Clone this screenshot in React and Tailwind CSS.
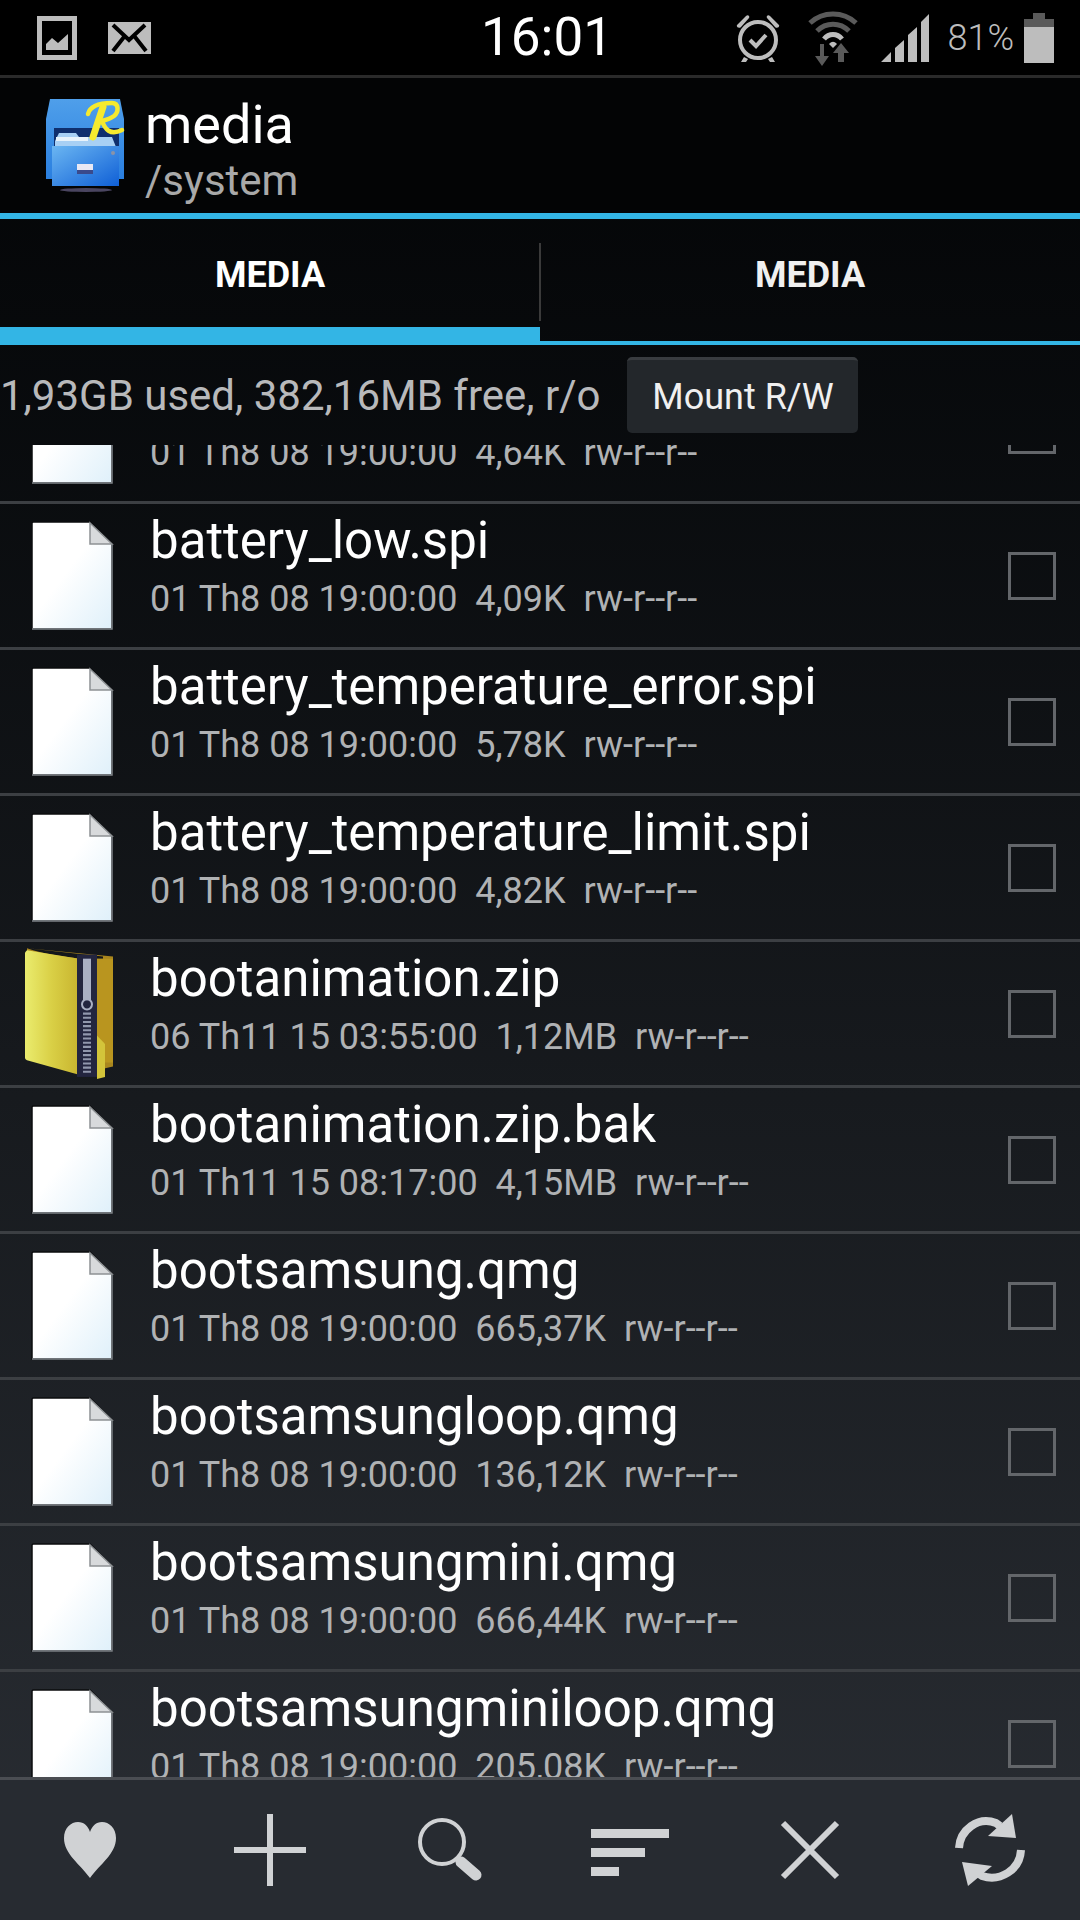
import React from 'react';

const files = [
    { name: '', meta: '01 Th8 08 19:00:00  4,64K  rw-r--r--' },
    { name: 'battery_low.spi', meta: '01 Th8 08 19:00:00  4,09K  rw-r--r--' },
    { name: 'battery_temperature_error.spi', meta: '01 Th8 08 19:00:00  5,78K  rw-r--r--' },
    { name: 'battery_temperature_limit.spi', meta: '01 Th8 08 19:00:00  4,82K  rw-r--r--' },
    { name: 'bootanimation.zip', meta: '06 Th11 15 03:55:00  1,12MB  rw-r--r--', zip: true },
    { name: 'bootanimation.zip.bak', meta: '01 Th11 15 08:17:00  4,15MB  rw-r--r--' },
    { name: 'bootsamsung.qmg', meta: '01 Th8 08 19:00:00  665,37K  rw-r--r--' },
    { name: 'bootsamsungloop.qmg', meta: '01 Th8 08 19:00:00  136,12K  rw-r--r--' },
    { name: 'bootsamsungmini.qmg', meta: '01 Th8 08 19:00:00  666,44K  rw-r--r--' },
    { name: 'bootsamsungminiloop.qmg', meta: '01 Th8 08 19:00:00  205,08K  rw-r--r--' },
];

const FileIcon = () => (
    <svg width="84" height="110" viewBox="0 0 84 110" className="shrink-0">
        <defs>
            <linearGradient id="page" x1="0" y1="0" x2="1" y2="1">
                <stop offset="0.45" stopColor="#ffffff" />
                <stop offset="1" stopColor="#dff0fa" />
            </linearGradient>
        </defs>
        <path d="M3 1H60L82 23V108H2V2Z" fill="url(#page)" stroke="#0b0c0e" strokeWidth="1.5" />
        <path d="M82 23V108H2" fill="none" stroke="#80858a" strokeWidth="1.5" />
        <path d="M60 2V23H82Z" fill="#d8dadc" stroke="#8d9194" strokeWidth="1.5" />
    </svg>
);

const ZipIcon = () => (
    <svg width="92" height="139" viewBox="0 0 92 134" preserveAspectRatio="none">
        <defs>
            <linearGradient id="zipFront" x1="0" y1="0" x2="1" y2="0">
                <stop offset="0" stopColor="#eaec6e" />
                <stop offset="0.5" stopColor="#d9cf45" />
                <stop offset="1" stopColor="#c8b42f" />
            </linearGradient>
        </defs>
        <path d="M2 8L88 16V122L78 124V16Z" fill="#a9861e" />
        <path d="M2 8C20 14 40 16 54 18H88V120H80V122L2 104Z" fill="#a9861e" />
        <path d="M2 10L54 18V130L2 116C0 115 0 114 0 112V12Z" fill="url(#zipFront)" />
        <path d="M72 18H88V118H80V100L72 92Z" fill="#b9951f" />
        <path d="M72 92L80 100V132L72 134Z" fill="#d3c43a" />
        <rect x="52" y="14" width="20" height="118" fill="#23253f" />
        <path d="M58 18H66V58H58Z" fill="#aab0c4" />
        <circle cx="62" cy="62" r="5" fill="none" stroke="#aab0c4" strokeWidth="2" />
        <path d="M62 70V130" stroke="#9197ad" strokeWidth="8" strokeDasharray="2 2" />
    </svg>
);

const AppIcon = () => (
    <svg width="80" height="94" viewBox="0 0 80 94" className="shrink-0">
        <defs>
            <linearGradient id="cabinet" x1="0" y1="0" x2="0" y2="1">
                <stop offset="0" stopColor="#4f9fea" />
                <stop offset="1" stopColor="#2a7fe0" />
            </linearGradient>
            <linearGradient id="drawer" x1="0" y1="0" x2="1" y2="1">
                <stop offset="0" stopColor="#6bb6f2" />
                <stop offset="1" stopColor="#0f5fd6" />
            </linearGradient>
        </defs>
        <ellipse cx="40" cy="91" rx="26" ry="2" fill="#4a4560" />
        <path d="M4 0H74L78 20V80H0V20Z" fill="url(#cabinet)" />
        <rect x="8" y="29" width="65" height="20" fill="#0f2f6e" />
        <path d="M9 42L13 34H30L33 38H66L70 48H9Z" fill="#a8d0f4" />
        <rect x="10" y="38" width="32" height="4" fill="#e8f3fb" />
        <rect x="6" y="47" width="67" height="40" fill="url(#drawer)" />
        <rect x="31" y="65" width="16" height="10" fill="#e8e8f4" />
        <rect x="31" y="71" width="16" height="4" fill="#3a4a8c" />
        <circle cx="67" cy="54" r="2" fill="#8a93a8" />
        <path d="M42 15C44 7 54 4 66 4C73 4 73 13 68 17C64 20 60 21 56 22C59 30 64 37 76 31" fill="none" stroke="#f6ea2e" strokeWidth="4.5" strokeLinecap="round" />
        <path d="M57 8L47 38" fill="none" stroke="#f6ea2e" strokeWidth="7" strokeLinecap="round" />
    </svg>
);

const StatusIcons = () => (
    <div className="flex items-center justify-end gap-0">
        {/* alarm */}
        <svg width="46" height="50" viewBox="0 0 46 50" className="mr-[26px]">
            <circle cx="23" cy="27" r="18" fill="none" stroke="#bdbdbd" strokeWidth="4" />
            <path d="M15 27L21 33L31 22" fill="none" stroke="#bdbdbd" strokeWidth="4" />
            <path d="M2 12L11 3C13 1 15 3 14 5L6 14C4 16 1 14 2 12ZM44 12L35 3C33 1 31 3 32 5L40 14C42 16 45 14 44 12Z" fill="#bdbdbd" />
            <path d="M9 44L6 49H11L13 46ZM37 44L40 49H35L33 46Z" fill="#bdbdbd" />
        </svg>
        {/* wifi */}
        <svg width="52" height="56" viewBox="0 0 52 56" className="mr-[22px]">
            <path d="M3 13C16 1 36 1 49 13" fill="none" stroke="#5a5a5a" strokeWidth="5" />
            <path d="M10 21C19 12 33 12 42 21" fill="none" stroke="#5a5a5a" strokeWidth="5" />
            <path d="M17 29C22 23 30 23 35 29" fill="none" stroke="#bdbdbd" strokeWidth="5" />
            <path d="M22 34C25 31 27 31 30 34L26 38Z" fill="#bdbdbd" />
            <path d="M17 34V46H22L15 56L8 46H13V34Z" fill="#5a5a5a" />
            <path d="M34 33L42 43H37V52H31V43H26Z" fill="#5a5a5a" />
        </svg>
        {/* signal */}
        <svg width="48" height="50" viewBox="0 0 48 50" className="mr-[18px]">
            <path d="M0 49L10 39V49Z M14 35L23 27V49H14Z M27 22L36 14V49H27Z M40 9L48 1V49H40Z" fill="#bdbdbd" />
        </svg>
        <span className="text-[36px] leading-none text-[#bdbdbd] mr-[10px] font-light">81%</span>
        <svg width="30" height="50" viewBox="0 0 30 50" className="mr-[26px]">
            <rect x="9" y="0" width="12" height="6" fill="#5a5a5a" />
            <rect x="0" y="6" width="30" height="8" fill="#5a5a5a" />
            <rect x="0" y="14" width="30" height="36" fill="#bdbdbd" />
        </svg>
    </div>
);

const Row = ({ file }) => (
    <div className="h-[146px] shrink-0 border-b-[3px] border-[#3c3f43] flex items-center relative">
        <div className="w-[150px] shrink-0 flex pl-[30px] items-center">
            {file.zip ? <div className="-ml-[5px] -mt-[8px]"><ZipIcon /></div> : <FileIcon />}
        </div>
        <div className="flex-1 min-w-0 self-start pt-[7px]">
            <div className="text-[51px] leading-[60px] text-white whitespace-nowrap h-[60px]">{file.name}</div>
            <div className="text-[36px] leading-[44px] text-[#b0b2b4] whitespace-pre mt-[6px]">{file.meta}</div>
        </div>
        <div className="w-[48px] h-[48px] border-[3px] border-[#63666a] mr-[24px] shrink-0"></div>
    </div>
);

const ToolIcon = ({ children }) => (
    <div className="flex items-center justify-center">
        <svg width="80" height="80" viewBox="0 0 80 80">{children}</svg>
    </div>
);

export default function App() {
    return (
        <div className="w-[1080px] h-[1920px] flex flex-col overflow-hidden bg-gradient-to-b from-[#030405] to-[#2a2e34] font-['Roboto',sans-serif]">
            {/* status bar */}
            <div className="h-[78px] shrink-0 bg-black border-b-[3px] border-[#2a2a2a] grid grid-cols-[1fr_auto_1fr] items-center">
                <div className="flex items-center pl-[37px] gap-[31px]">
                    <svg width="40" height="44" viewBox="0 0 40 44">
                        <path fillRule="evenodd" d="M0 0H40V44H0ZM5 5V39H35V5Z" fill="#bdbdbd" />
                        <path d="M9 34V28L15 22L21 27L31 18V34Z" fill="#bdbdbd" />
                    </svg>
                    <svg width="43" height="32" viewBox="0 0 43 32">
                        <rect width="43" height="32" fill="#bdbdbd" />
                        <path d="M5 3L21 18L37 3M5 29L16 15M38 29L27 15" fill="none" stroke="#000" strokeWidth="4" />
                    </svg>
                </div>
                <div className="text-[53px] leading-none text-white pl-[14px]">16:01</div>
                <StatusIcons />
            </div>
            {/* title bar */}
            <div className="h-[135px] shrink-0 bg-[#030405] flex items-center pl-[46px] gap-[19px]">
                <AppIcon />
                <div className="flex flex-col mt-[10px]">
                    <div className="text-[54px] leading-[60px] text-white">media</div>
                    <div className="text-[42px] leading-[50px] text-[#a9a9a9] mt-[1px]">/system</div>
                </div>
            </div>
            <div className="h-[6px] shrink-0 bg-[#33b5e5]"></div>
            {/* tabs */}
            <div className="h-[126px] shrink-0 flex relative">
                <div className="w-[540px] flex items-start justify-center pt-[35px] border-b-[18px] border-[#33b5e5]">
                    <span className="text-[36px] leading-[42px] font-bold text-white">MEDIA</span>
                </div>
                <div className="absolute left-[539px] top-[24px] h-[78px] w-[2px] bg-[#3a3a3a]"></div>
                <div className="flex-1 flex items-start justify-center pt-[35px] border-b-[4px] border-[#33b5e5]">
                    <span className="text-[36px] leading-[42px] font-bold text-[#f0f0f0]">MEDIA</span>
                </div>
            </div>
            {/* usage + mount */}
            <div className="h-[100px] shrink-0 flex items-center gap-[27px]">
                <span className="text-[42px] text-[#b8b9bb] whitespace-nowrap">1,93GB used, 382,16MB free, r/o</span>
                <div className="w-[231px] h-[76px] rounded-[5px] bg-[#23272b] border-t-[3px] border-[#393c40] flex items-center justify-center text-[36px] text-[#f0f0f0]">Mount R/W</div>
            </div>
            {/* file list */}
            <div className="flex-1 min-h-0 overflow-hidden">
                <div className="flex flex-col -mt-[87px]">
                    {files.map((file, i) => <Row key={i} file={file} />)}
                </div>
            </div>
            {/* toolbar */}
            <div className="h-[143px] shrink-0 bg-[#272b31] border-t-[3px] border-[#4a4d52] grid grid-cols-6 items-center">
                <ToolIcon>
                    <path d="M40 68C30 54 14 44 14 28C14 18 21 12 28 12C34 12 38 16 40 22C42 16 46 12 52 12C59 12 66 18 66 28C66 44 50 54 40 68Z" fill="#d0d2d4" />
                </ToolIcon>
                <ToolIcon>
                    <path d="M40 4V76M4 40H76" stroke="#d0d2d4" strokeWidth="6" fill="none" />
                </ToolIcon>
                <ToolIcon>
                    <circle cx="32" cy="32" r="22" fill="none" stroke="#d0d2d4" strokeWidth="4" />
                    <path d="M51 52L66 65" stroke="#d0d2d4" strokeWidth="11" strokeLinecap="round" />
                </ToolIcon>
                <ToolIcon>
                    <path d="M1 19H79V28H1ZM1 38H55V47H1ZM1 57H29V66H1Z" fill="#d0d2d4" />
                </ToolIcon>
                <ToolIcon>
                    <path d="M13 13L67 67M67 13L13 67" stroke="#d0d2d4" strokeWidth="6" fill="none" />
                </ToolIcon>
                <ToolIcon>
                    <path d="M9 38C10 20 28 6 46 13L50 16" fill="none" stroke="#d0d2d4" strokeWidth="8" />
                    <path d="M62 4L66 28L38 26Z" fill="#d0d2d4" />
                    <path d="M71 40C70 60 50 72 32 66L28 63" fill="none" stroke="#d0d2d4" strokeWidth="8" />
                    <path d="M18 76L12 52L42 56Z" fill="#d0d2d4" />
                </ToolIcon>
            </div>
        </div>
    );
}
